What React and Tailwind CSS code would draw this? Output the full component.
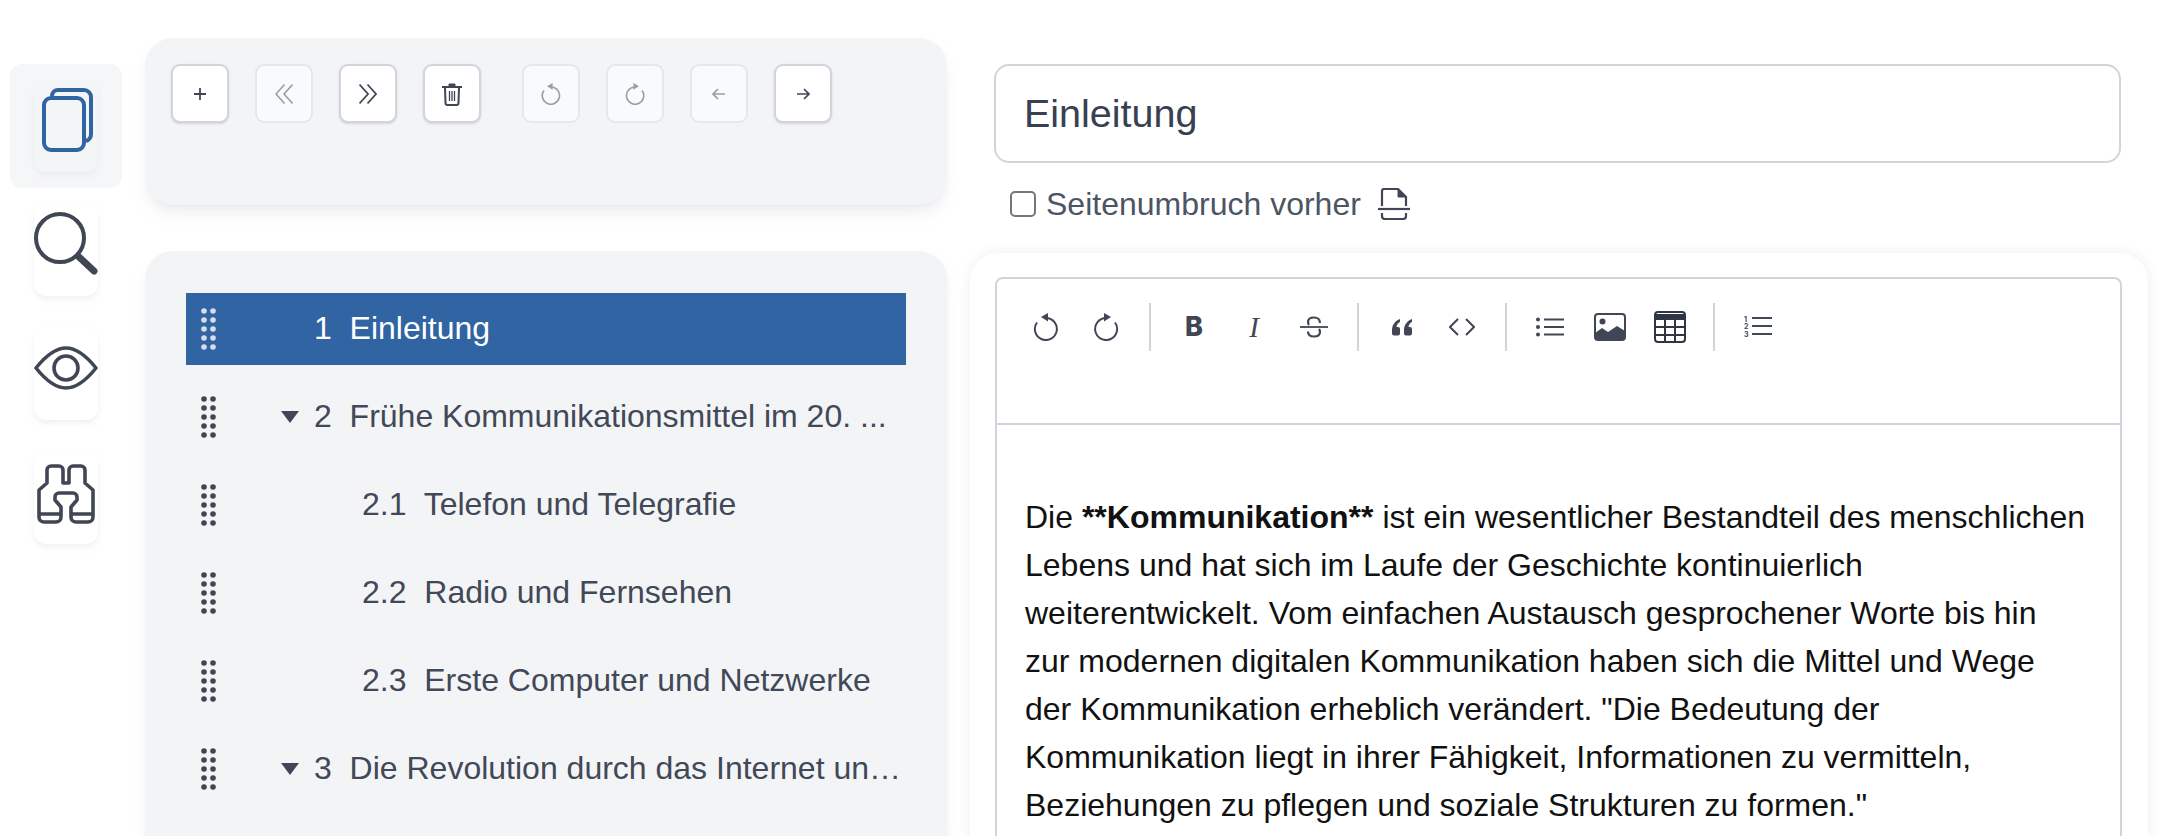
import React from 'react';

const ink = '#404654';

const DragDots = ({ color }) => (
  <svg width="15" height="42" viewBox="0 0 15 42" fill={color}>
    {[3, 12, 21, 30, 39].map((y) => (
      <g key={y}>
        <circle cx="3" cy={y} r="2.8" />
        <circle cx="12" cy={y} r="2.8" />
      </g>
    ))}
  </svg>
);

const rows = [
  { label: '1  Einleitung', selected: true },
  { label: '2  Frühe Kommunikationsmittel im 20. ...', arrow: true },
  { label: '2.1  Telefon und Telegrafie', child: true },
  { label: '2.2  Radio und Fernsehen', child: true },
  { label: '2.3  Erste Computer und Netzwerke', child: true },
  { label: '3  Die Revolution durch das Internet un…', arrow: true },
];

const TreeRow = ({ label, selected, arrow, child }) => (
  <div className={`flex items-center h-[72px] mb-4 pl-[15px] ${selected ? 'bg-[#3064a2] text-white' : 'text-[#414857]'}`}>
    <DragDots color={selected ? '#d5deea' : ink} />
    <div className={`shrink-0 flex justify-end pr-[15px] ${child ? 'w-[146px]' : 'w-[98px]'}`}>
      {arrow && (
        <svg width="18" height="12" viewBox="0 0 18 12" fill={ink}>
          <polygon points="0,0 18,0 9,12" />
        </svg>
      )}
    </div>
    <div className="flex-1 min-w-0 pb-[2px] whitespace-pre text-[32px]">{label}</div>
  </div>
);

const Undo = ({ color = ink, flip, size = 28 }) => (
  <svg width={size} height={size} viewBox="0 1.5 28 28" className={flip ? '-scale-x-100' : ''}>
    <path d="M14 6.5 A11 11 0 1 1 5 11" fill="none" stroke={color} strokeWidth="2" />
    <polygon points="9,5.5 16,1.5 16,10" fill={color} />
  </svg>
);

const SmallBtn = ({ disabled, className = '', children }) => (
  <button className={`w-[58px] h-[59px] shrink-0 flex items-center justify-center rounded-[9px] border-2 ${disabled ? 'bg-[#f9fafb] border-[#e5e7eb]' : 'bg-white border-[#d1d5db] shadow-sm'} ${className}`}>
    {children}
  </button>
);

const gray = '#9a9da5';

const Sidebar = () => (
  <div className="w-[112px] ml-[10px] pt-[64px] shrink-0">
    <div className="h-[124px] px-6 py-4 rounded-xl bg-[#f5f6f8]">
      <div className="w-16 h-[92px] rounded-xl bg-[#f4f5f7] shadow-md shadow-gray-200/60">
        <svg width="64" height="80" viewBox="0 0 64 80" fill="none" stroke="#3064a2" strokeWidth="4">
          <rect x="10" y="18" width="40" height="52" rx="7" />
          <path d="M18 16 a6 6 0 0 1 6-6 H50 a7 7 0 0 1 7 7 V54 a7 7 0 0 1 -5 7" />
        </svg>
      </div>
    </div>
    <div className="h-[124px] px-6 py-4">
      <div className="w-16 h-[92px] rounded-xl bg-white shadow-md shadow-gray-200/50">
        <svg width="64" height="80" viewBox="0 0 64 80" fill="none" stroke={ink}>
          <circle cx="26" cy="34" r="24" strokeWidth="4" />
          <path d="M45 53 L60 67" strokeWidth="7" strokeLinecap="round" />
        </svg>
      </div>
    </div>
    <div className="h-[124px] px-6 py-4">
      <div className="w-16 h-[92px] rounded-xl bg-white shadow-md shadow-gray-200/50">
        <svg width="64" height="80" viewBox="0 0 64 80" fill="none" stroke={ink} strokeWidth="3.6">
          <path d="M2 40 C14 25 24 20 32 20 C40 20 50 25 62 40 C50 55 40 60 32 60 C24 60 14 55 2 40Z" strokeLinejoin="round" />
          <circle cx="32" cy="40" r="12" />
        </svg>
      </div>
    </div>
    <div className="h-[124px] px-6 py-4">
      <div className="w-16 h-[92px] rounded-xl bg-white shadow-md shadow-gray-200/50">
        <svg width="64" height="80" viewBox="0 0 64 80" fill="none" stroke={ink} strokeWidth="3.6" strokeLinejoin="round">
          <path d="M13 31 V18 a4 4 0 0 1 4-4 h8 a4 4 0 0 1 4 4 V31 H35 V18 a4 4 0 0 1 4-4 h8 a4 4 0 0 1 4 4 V31 L59 38 V65 a5 5 0 0 1 -5 5 H42 a5 5 0 0 1 -5-5 V55 L43 48 V45 a4 4 0 0 0 -4-4 H25 a4 4 0 0 0 -4 4 V48 L27 55 V65 a5 5 0 0 1 -5 5 H10 a5 5 0 0 1 -5-5 V38 Z" />
          <path d="M5 62 H27 M37 62 H59" />
        </svg>
      </div>
    </div>
  </div>
);

const TreeToolbar = () => (
  <div className="h-[167px] p-[26px] rounded-[28px] bg-[#f3f4f6] shadow-lg shadow-gray-300/40 flex items-start gap-[26px]">
    <SmallBtn>
      <svg width="14" height="14" viewBox="0 0 14 14" stroke={ink} strokeWidth="1.8"><path d="M7 1 V13 M1 7 H13" /></svg>
    </SmallBtn>
    <SmallBtn disabled>
      <svg width="18" height="22" viewBox="0 0 18 22" fill="none" stroke={gray} strokeWidth="1.6"><path d="M9.5 1.5 L1 11 L9.5 20.5 M17.5 1.5 L9 11 L17.5 20.5" /></svg>
    </SmallBtn>
    <SmallBtn>
      <svg width="18" height="22" viewBox="0 0 18 22" fill="none" stroke={ink} strokeWidth="1.8"><path d="M.5 1.5 L9 11 L.5 20.5 M8.5 1.5 L17 11 L8.5 20.5" /></svg>
    </SmallBtn>
    <SmallBtn>
      <svg width="20" height="24" viewBox="0 0 20 24" fill="none" stroke={ink} strokeWidth="2">
        <path d="M0 5 H20" />
        <path d="M7 4 V2 H13 V4" fill={ink} strokeWidth="1" />
        <path d="M3 6 L3.5 21 a2 2 0 0 0 2 2 H14.5 a2 2 0 0 0 2-2 L17 6" />
        <path d="M7.5 9 V19 M10 9 V19 M12.5 9 V19" strokeWidth="1.3" />
      </svg>
    </SmallBtn>
    <SmallBtn disabled className="ml-[15px]"><Undo color={gray} size={22} /></SmallBtn>
    <SmallBtn disabled><Undo color={gray} size={22} flip /></SmallBtn>
    <SmallBtn disabled>
      <svg width="14" height="12" viewBox="0 0 14 12" fill="none" stroke={gray} strokeWidth="1.7"><path d="M13 6 H1 M6 1 L1 6 L6 11" /></svg>
    </SmallBtn>
    <SmallBtn>
      <svg width="14" height="12" viewBox="0 0 14 12" fill="none" stroke={ink} strokeWidth="1.7"><path d="M1 6 H13 M8 1 L13 6 L8 11" /></svg>
    </SmallBtn>
  </div>
);

const EdBtn = ({ children }) => (
  <button className="w-[60px] h-[60px] shrink-0 flex items-center justify-center text-[#404654]">{children}</button>
);

const Sep = () => <div className="w-0.5 h-12 mx-[13px] my-1.5 shrink-0 bg-[#d1d5db]" />;

const EditorToolbar = () => (
  <div className="h-[146px] pl-[19px] pt-[18px] border-b-2 border-[#d1d5db] flex items-start">
    <EdBtn><Undo /></EdBtn>
    <EdBtn><Undo flip /></EdBtn>
    <Sep />
    <EdBtn><span className="font-['Inter',sans-serif] font-extrabold text-[27px] leading-[32px]">B</span></EdBtn>
    <EdBtn><span className="font-['Liberation_Serif',serif] italic text-[29px] leading-[34px]">I</span></EdBtn>
    <EdBtn>
      <svg width="28" height="22" viewBox="0 0 28 22" fill="none" stroke={ink} strokeWidth="2.2">
        <path d="M0 11 H28" strokeWidth="1.8" />
        <path d="M20 7 C20 3 17.5 1.5 14 1.5 C10.5 1.5 8 3 8 6 C8 7 8.3 8 9 9" />
        <path d="M19 13 C19.7 14 20 15 20 16 C20 19 17.5 20.5 14 20.5 C10.5 20.5 8 19 8 15.5" />
      </svg>
    </EdBtn>
    <Sep />
    <EdBtn>
      <svg width="20" height="18" viewBox="0 0 20 18" fill={ink}>
        <path d="M8 1 C3 3 0 7 0 12 V15.5 a2 2 0 0 0 2 2 h4 a2 2 0 0 0 2-2 V11 a2 2 0 0 0 -2-2 H4.5 C4.8 6.5 6 5 8 4 Z" />
        <path d="M20 1 C15 3 12 7 12 12 V15.5 a2 2 0 0 0 2 2 h4 a2 2 0 0 0 2-2 V11 a2 2 0 0 0 -2-2 H16.5 C16.8 6.5 18 5 20 4 Z" />
      </svg>
    </EdBtn>
    <EdBtn>
      <svg width="26" height="20" viewBox="0 0 26 20" fill="none" stroke={ink} strokeWidth="2"><path d="M9 2 L1 10 L9 18 M17 2 L25 10 L17 18" /></svg>
    </EdBtn>
    <Sep />
    <EdBtn>
      <svg width="28" height="20" viewBox="0 0 28 20" fill={ink}>
        <circle cx="2" cy="2.5" r="2" /><circle cx="2" cy="10" r="2" /><circle cx="2" cy="17.5" r="2" />
        <path d="M8 2.5 H28 M8 10 H28 M8 17.5 H28" stroke={ink} strokeWidth="1.8" />
      </svg>
    </EdBtn>
    <EdBtn>
      <svg width="32" height="28" viewBox="0 0 32 28" fill={ink}>
        <rect x="1" y="1" width="30" height="26" rx="3" fill="none" stroke={ink} strokeWidth="2" />
        <circle cx="8.5" cy="8.5" r="3" />
        <path d="M1 20 L8 15 L14 19 L23 13 L31 18 V25 a2 2 0 0 1 -2 2 H3 a2 2 0 0 1 -2-2 Z" />
      </svg>
    </EdBtn>
    <EdBtn>
      <svg width="32" height="32" viewBox="0 0 32 32" fill="none" stroke="#2f3542" strokeWidth="2">
        <rect x="1" y="1" width="30" height="30" rx="3" />
        <path d="M2 4 H30 V8 H2 Z" fill="#2f3542" />
        <path d="M1 8 H31 M1 16 H31 M1 24 H31 M11 8 V31 M21 8 V31" />
      </svg>
    </EdBtn>
    <Sep />
    <EdBtn>
      <svg width="28" height="24" viewBox="0 0 28 24" fill={ink}>
        <text x="0" y="6.5" fontSize="7" fontWeight="700" fontFamily="Inter, sans-serif">1</text>
        <text x="0" y="14" fontSize="7" fontWeight="700" fontFamily="Inter, sans-serif">2</text>
        <text x="0" y="21.5" fontSize="7" fontWeight="700" fontFamily="Inter, sans-serif">3</text>
        <path d="M8 3 H28 M8 11 H28 M8 19 H28" stroke={ink} strokeWidth="1.8" />
      </svg>
    </EdBtn>
  </div>
);

export default function App() {
  return (
    <div className="flex h-[836px] overflow-hidden bg-white font-['Liberation_Sans',Arial,sans-serif]">
      <Sidebar />

      <div className="w-[802px] ml-[23px] pt-[38px] shrink-0 flex flex-col gap-[46px]">
        <TreeToolbar />
        <div className="flex-1 rounded-t-[28px] bg-[#f3f4f6] shadow-lg shadow-gray-300/40 pt-[42px] px-[41px]">
          {rows.map((r) => (
            <TreeRow key={r.label} {...r} />
          ))}
        </div>
      </div>

      <div className="w-[1178px] ml-[23px] shrink-0">
        <div className="pt-[64px] px-6">
          <div className="w-[1127px] h-[99px] flex items-center px-[28px] rounded-[15px] border-2 border-[#d1d5db] text-[39.5px] text-[#374151]">
            Einleitung
          </div>
          <div className="h-[82px] pl-4 flex items-center text-[32px] text-[#4b5563]">
            <input type="checkbox" className="w-[26px] h-[26px] mr-[10px] appearance-none rounded-[5px] border-2 border-[#767676]" />
            <span>Seitenumbruch vorher</span>
            <svg width="32" height="32" viewBox="0 0 32 32" fill="none" stroke={ink} strokeWidth="2.2" className="ml-[17px]">
              <path d="M4 18 V3 a2 2 0 0 1 2-2 H20 L28 9 V18" />
              <path d="M20 1 V9 H28 Z" fill={ink} strokeWidth="1" />
              <path d="M0 21 H32" />
              <path d="M4 25 V28 a3 3 0 0 0 3 3 H25 a3 3 0 0 0 3-3 V25" />
            </svg>
          </div>
        </div>
        <div className="h-[700px] mt-2 px-[25px] pt-6 rounded-[28px] bg-white shadow-[0_0_14px_rgba(0,0,0,0.07)]">
          <div className="w-[1127px] h-[700px] rounded-t-lg border-2 border-[#d1d5db]">
            <EditorToolbar />
            <p className="pl-[28px] pt-[68px] text-[32px] leading-[48px] text-[#111] whitespace-nowrap">
              Die <b>**Kommunikation**</b> ist ein wesentlicher Bestandteil des menschlichen<br />
              Lebens und hat sich im Laufe der Geschichte kontinuierlich<br />
              weiterentwickelt. Vom einfachen Austausch gesprochener Worte bis hin<br />
              zur modernen digitalen Kommunikation haben sich die Mittel und Wege<br />
              der Kommunikation erheblich verändert. "Die Bedeutung der<br />
              Kommunikation liegt in ihrer Fähigkeit, Informationen zu vermitteln,<br />
              Beziehungen zu pflegen und soziale Strukturen zu formen."
            </p>
          </div>
        </div>
      </div>
    </div>
  );
}
